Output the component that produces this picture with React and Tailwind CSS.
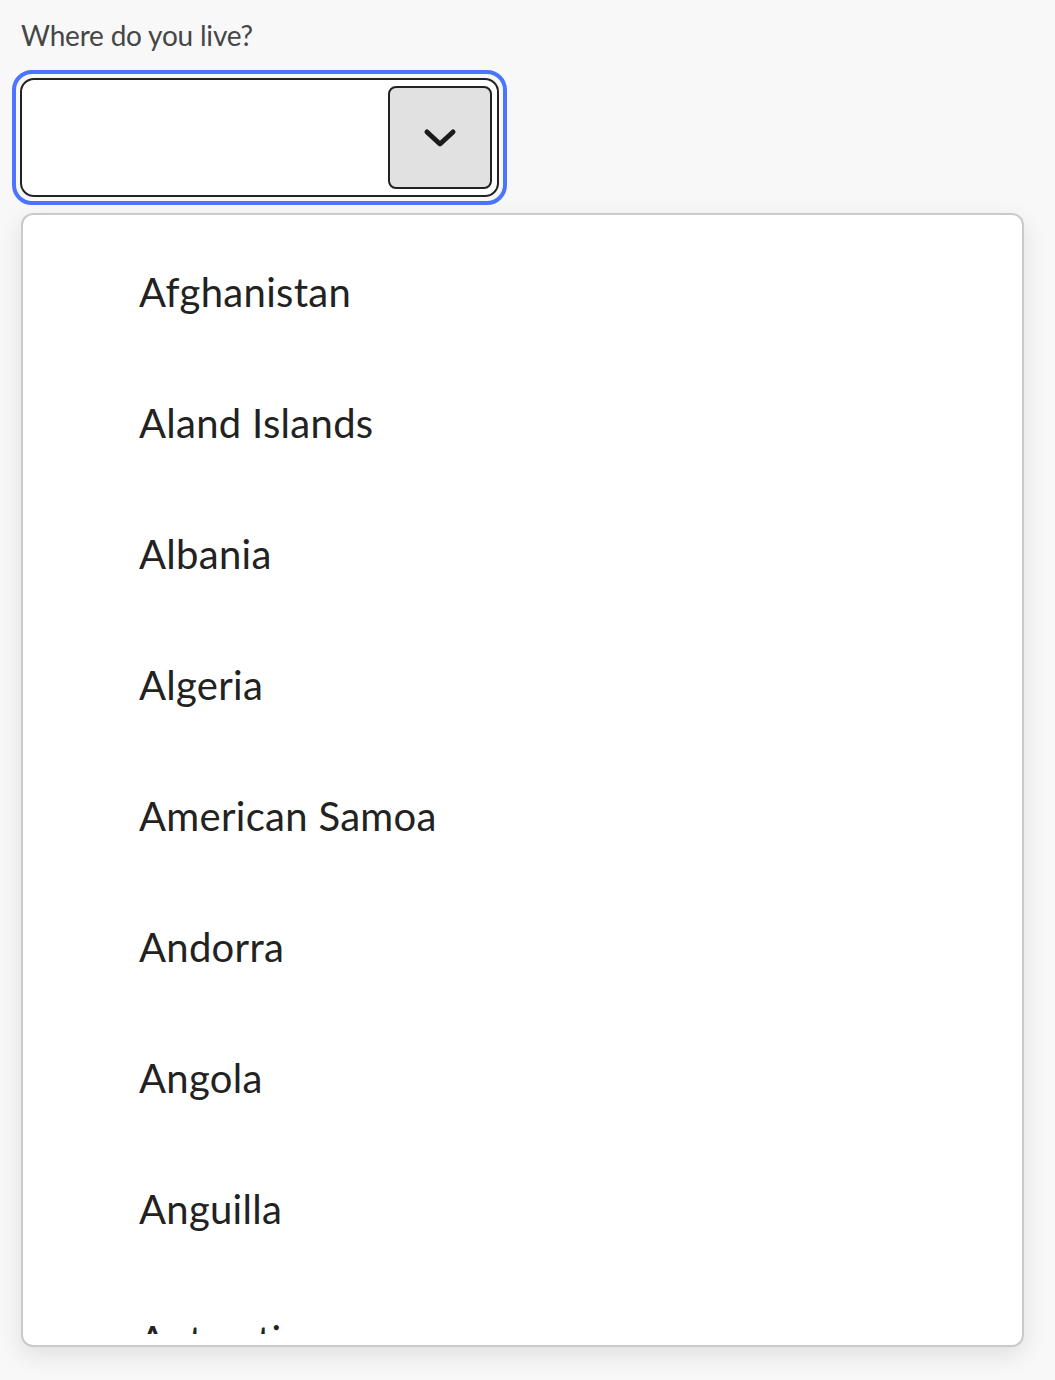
export default function App() {
  const items = [
    "Afghanistan",
    "Aland Islands",
    "Albania",
    "Algeria",
    "American Samoa",
    "Andorra",
    "Angola",
    "Anguilla",
    "Antarctica",
  ];
  return (
    <div className="min-h-[1380px] w-[1055px] bg-[#f8f8f8] font-['Lato',sans-serif] overflow-hidden">
      <div className="pl-[21px] pt-[17px] text-[28px] leading-[36px] text-[#464646] tracking-[-0.2px]">Where do you live?</div>
      <div className="ml-[12px] mt-[17px] w-[495px] h-[135px] rounded-[20px] border-[4px] border-[#4b75ff] p-[4px]">
        <div className="h-full w-full rounded-[14px] border-[2px] border-[#222] bg-white flex justify-end py-[6px] pr-[5px]">
          <div className="w-[104px] h-full rounded-[8px] border-[2px] border-[#222] bg-[#e1e1e1] flex items-center justify-center">
            <svg width="34" height="22" viewBox="0 0 34 22" fill="none">
              <path d="M4 5 L17 17 L30 5" stroke="#1b1b1b" strokeWidth="5" strokeLinecap="round" strokeLinejoin="round" />
            </svg>
          </div>
        </div>
      </div>
      <div className="ml-[21px] mt-[8px] w-[1003px] h-[1134px] rounded-[12px] border-[2px] border-[#cacaca] bg-white shadow-[0_8px_24px_rgba(0,0,0,0.10)] py-[11px]">
        <div className="h-full overflow-hidden">
          {items.map((it) => (
            <div key={it} className="h-[131px] flex items-center pl-[116px] text-[40px] text-[#222] tracking-[0.3px]">
              {it}
            </div>
          ))}
        </div>
      </div>
    </div>
  );
}
